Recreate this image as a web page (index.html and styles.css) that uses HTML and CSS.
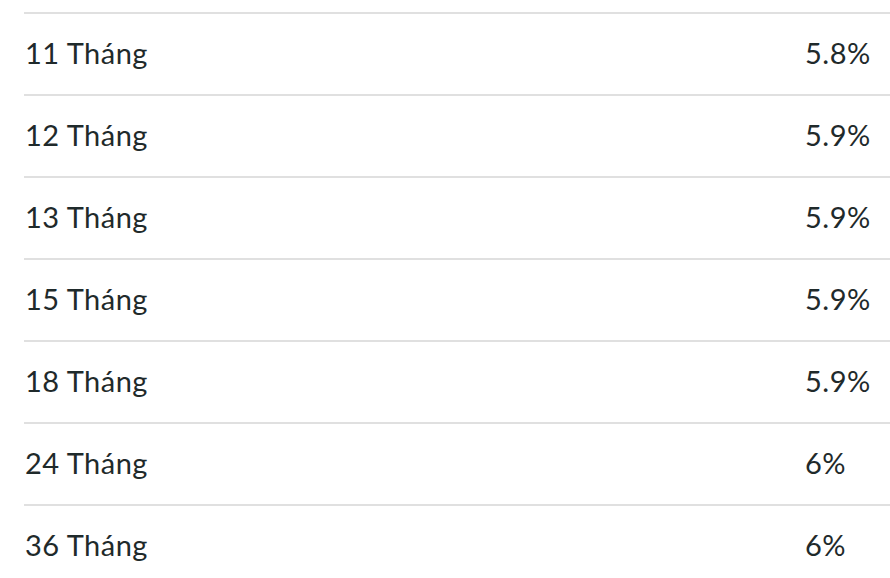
FILE: index.html
```html
<!DOCTYPE html>
<html lang="vi">
<head>
    <meta charset="UTF-8">
    <meta name="viewport" content="width=device-width, initial-scale=1.0">
    <title>Lãi suất</title>
    <link rel="stylesheet" href="styles.css">
</head>
<body>
    <div class="rate-table">
        <div class="row"><span class="term">11 Tháng</span><span class="rate">5.8%</span></div>
        <div class="row"><span class="term">12 Tháng</span><span class="rate">5.9%</span></div>
        <div class="row"><span class="term">13 Tháng</span><span class="rate">5.9%</span></div>
        <div class="row"><span class="term">15 Tháng</span><span class="rate">5.9%</span></div>
        <div class="row"><span class="term">18 Tháng</span><span class="rate">5.9%</span></div>
        <div class="row"><span class="term">24 Tháng</span><span class="rate">6%</span></div>
        <div class="row"><span class="term">36 Tháng</span><span class="rate">6%</span></div>
    </div>
</body>
</html>
```

FILE: styles.css
```css
body {
    margin: 0;
    padding: 0;
    background: #fff;
    font-family: Lato, "Noto Sans", sans-serif;
    color: #1f2a2b;
    overflow: hidden;
}

.rate-table {
    padding: 12px 0 0 24px;
}

.row {
    display: grid;
    grid-template-columns: 1fr 85px;
    align-items: center;
    height: 77px;
    padding-bottom: 3px;
    border-top: 2px solid #e0e0e0;
    padding-left: 1px;
    font-size: 29px;
    letter-spacing: 0.5px;
}

.rate {
    white-space: nowrap;
}
```
